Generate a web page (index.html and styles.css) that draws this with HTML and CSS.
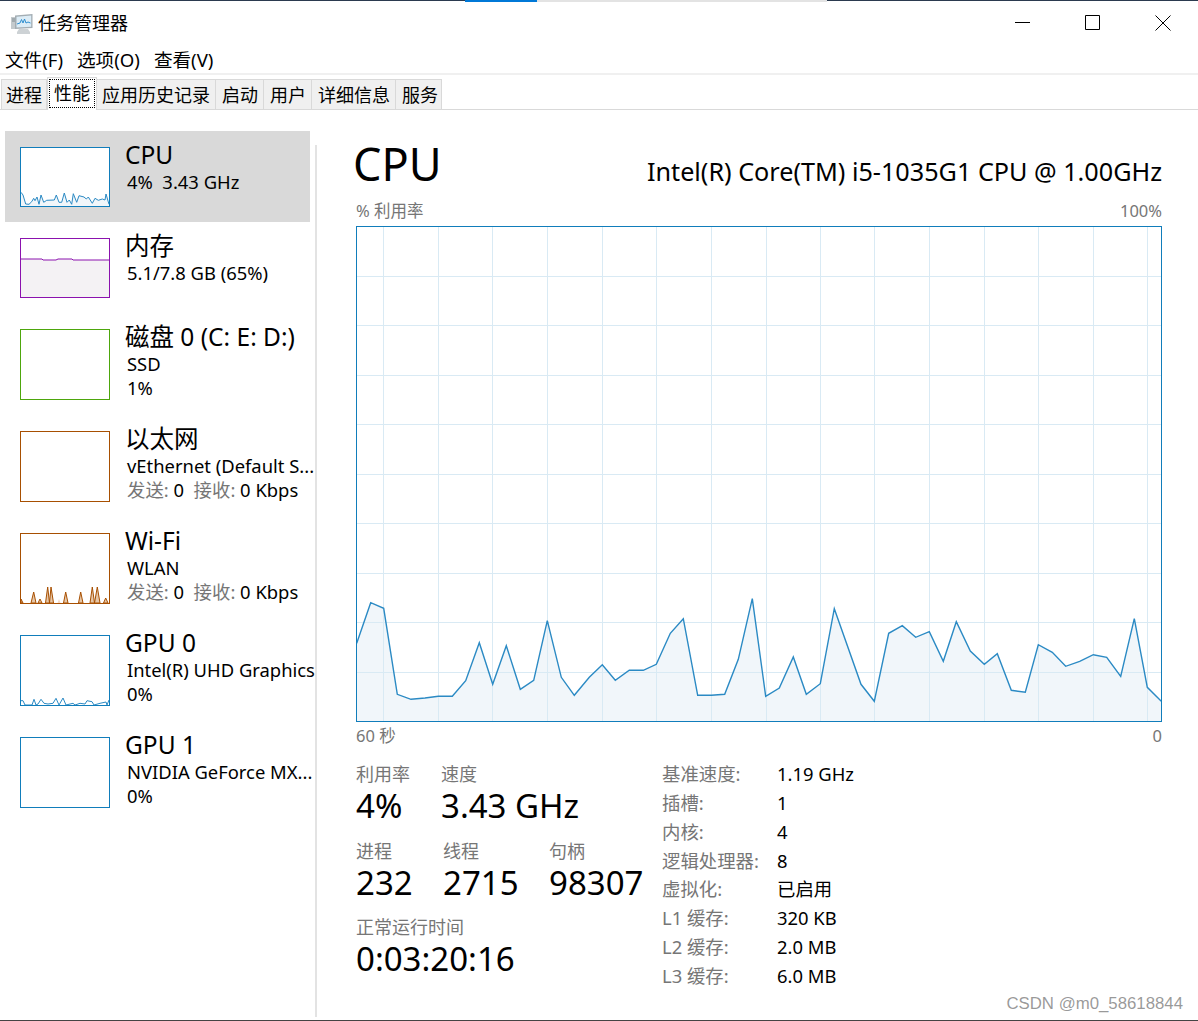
FILE: index.html
```html
<!DOCTYPE html>
<html lang="zh-CN">
<head>
  <meta charset="UTF-8" />
  <title>任务管理器</title>
  <link rel="stylesheet" href="styles.css">
</head>
<body>
  <div class="window">
    <div class="top-strip">
      <div class="strip-dark"></div>
      <div class="strip-blue"></div>
      <div class="strip-light"></div>
      <div class="strip-end"></div>
    </div>

    <div class="title-bar">
      <svg class="app-icon" viewBox="0 0 22 20">
        <path d="M0 3h5v12H0z" fill="#c4cacd"/>
        <path d="M1 5h3M1 7h3" stroke="#7f8a90"/>
        <path d="M4 1.5 21.5 0v14L4 15z" fill="#a3adb3"/>
        <path d="M5.500 2.800 20.200 1.600v11.200L5.500 13.600z" fill="#dcecf6"/>
        <path d="M6 10l3-1 1.500-3.500L12 9l1.500-4L15 9l2-1 2.500 1" fill="none" stroke="#2f8fd0"/>
        <path d="M8 15h9l2 3v2H6v-2z" fill="#cdd2d5"/>
      </svg>
      <span class="app-name">任务管理器</span>
      <div class="win-controls">
        <button class="win-btn"><svg width="16" height="16" viewBox="0 0 16 16"><path d="M0 7.500h15" stroke="#000"/></svg></button>
        <button class="win-btn"><svg width="16" height="16" viewBox="0 0 16 16"><path d="M.5.500h14v14H.5z" fill="none" stroke="#000"/></svg></button>
        <button class="win-btn"><svg width="16" height="16" viewBox="0 0 16 16"><path d="M.5.500l15 15M15.500.500l-15 15" stroke="#000"/></svg></button>
      </div>
    </div>

    <div class="menu-bar">
      <span>文件(F)</span>
      <span>选项(O)</span>
      <span>查看(V)</span>
    </div>

    <div class="tabs">
      <div class="tab tab-first">进程</div>
      <div class="tab tab-active"><span class="focus">性能</span></div>
      <div class="tab tab-apps">应用历史记录</div>
      <div class="tab">启动</div>
      <div class="tab">用户</div>
      <div class="tab">详细信息</div>
      <div class="tab tab-last">服务</div>
    </div>

    <div class="content">
      <div class="sidebar">
        <div class="item selected">
          <svg class="thumb cpu" viewBox="0 0 88 58" preserveAspectRatio="none">
            <polygon class="fill-blue" points="0,58 0,44.300 2,47 4.700,56 8,56.300 10.700,53.700 12.700,50.300 14,52.700 16,49 18,56.300 20,47 22.700,54.300 25.700,52.300 33.300,52 35.300,47 38,54.300 40.700,54.300 43.300,45 46,54.300 48.300,52 50.700,56.300 52.300,45.700 55.700,54.300 58,47.700 63,49 65.300,51 67.300,49 71.300,55.300 74,50.300 77.300,52.300 81.300,51 84,52 85,46 88,56.300 88,58"/>
            <polyline class="line-blue" points="0,44.300 2,47 4.700,56 8,56.300 10.700,53.700 12.700,50.300 14,52.700 16,49 18,56.300 20,47 22.700,54.300 25.700,52.300 33.300,52 35.300,47 38,54.300 40.700,54.300 43.300,45 46,54.300 48.300,52 50.700,56.300 52.300,45.700 55.700,54.300 58,47.700 63,49 65.300,51 67.300,49 71.300,55.300 74,50.300 77.300,52.300 81.300,51 84,52 85,46 88,56.300"/>
          </svg>
          <div class="info">
            <div class="name">CPU</div>
            <div class="detail">4%&nbsp; 3.43 GHz</div>
          </div>
        </div>
        <div class="item">
          <svg class="thumb mem" viewBox="0 0 88 58" preserveAspectRatio="none">
            <polygon class="fill-mem" points="0,20 21,20 22,21 35,21 37,20 51,20 52,21 88,21 88,58 0,58"/>
            <polyline class="line-mem" points="0,20 21,20 22,21 35,21 37,20 51,20 52,21 88,21"/>
          </svg>
          <div class="info">
            <div class="name">内存</div>
            <div class="detail">5.1/7.8 GB (65%)</div>
          </div>
        </div>
        <div class="item">
          <svg class="thumb tall disk" viewBox="0 0 88 69"></svg>
          <div class="info">
            <div class="name">磁盘 0 (C: E: D:)</div>
            <div class="detail">SSD</div>
            <div class="detail">1%</div>
          </div>
        </div>
        <div class="item">
          <svg class="thumb tall net" viewBox="0 0 88 69"></svg>
          <div class="info">
            <div class="name">以太网</div>
            <div class="detail">vEthernet (Default S...</div>
            <div class="detail"><span class="dim">发送:</span> 0&nbsp; <span class="dim">接收:</span> 0 Kbps</div>
          </div>
        </div>
        <div class="item">
          <svg class="thumb tall net" viewBox="0 0 88 69">
            <path class="peaks" d="M0 69V65L2 69ZM10 69L12.700 58L15 69ZM17 69L19 65L21 69ZM24.500 69L26.700 53L28.500 69L30 53L32.500 69ZM42.500 69L44.700 58L47 69ZM57.500 69L59.700 58L62 69ZM69 69L71.300 53L73.500 69L76.300 53L79 69ZM82.500 69L84.700 64L87 69Z"/>
            <path class="peak-pale" d="M36.500 69L38 65L39.500 69Z"/>
          </svg>
          <div class="info">
            <div class="name">Wi-Fi</div>
            <div class="detail">WLAN</div>
            <div class="detail"><span class="dim">发送:</span> 0&nbsp; <span class="dim">接收:</span> 0 Kbps</div>
          </div>
        </div>
        <div class="item">
          <svg class="thumb tall cpu" viewBox="0 0 88 69">
            <polyline class="line-blue" points="0,64.700 2,64.700 4,69 11,69 13,63.300 15,69 17,68 20,63.300 23,67.300 27,68 32,67.300 35,62.300 38,69 42,62 45,69 52,67.300 54,69 59,67.300 64,68 66,64.700 71,65.700 73,69 79,67.300 85,66 86,69 88,64"/>
          </svg>
          <div class="info">
            <div class="name">GPU 0</div>
            <div class="detail">Intel(R) UHD Graphics</div>
            <div class="detail">0%</div>
          </div>
        </div>
        <div class="item">
          <svg class="thumb tall cpu" viewBox="0 0 88 69"></svg>
          <div class="info">
            <div class="name">GPU 1</div>
            <div class="detail">NVIDIA GeForce MX...</div>
            <div class="detail">0%</div>
          </div>
        </div>
      </div>

      <div class="divider"></div>

      <div class="main">
        <div class="head">
          <div class="head-title">CPU</div>
          <div class="head-model">Intel(R) Core(TM) i5-1035G1 CPU @ 1.00GHz</div>
        </div>
        <div class="axis axis-top"><span>% 利用率</span><span>100%</span></div>
        <svg class="chart" viewBox="357 227 804 494" preserveAspectRatio="none">
          <polygon class="chart-fill" points="356.700,643.300 370.700,602.700 383.700,608.300 397.300,694.300 411,699.300 425,698 438.300,696.300 452.300,696.300 465.700,680.700 479.300,642.700 492.700,684.300 506.300,645.700 520.300,689.300 533.700,680.300 547.300,620.700 561.300,677.300 574.300,695.300 589.300,677.300 602.300,664.700 615.300,680.300 629.300,670.300 643.300,670.300 656.300,664.300 670.300,633.300 683.300,618.700 697.700,695.300 711.300,695.300 724.700,694.300 738.300,659.300 752.300,598.700 765.700,696.300 779.300,688 793.300,657 806.300,694.300 820.300,683.700 834.300,608.700 861,684.300 874.300,701.300 888.700,633.300 902.300,625.700 915.700,637.300 929.300,631.700 943.300,661.300 956.300,621.700 970.300,651 984.300,664.300 997.300,653.700 1011.300,690.300 1025.300,692.300 1038.300,644.700 1052.300,652.300 1065.700,666.300 1079.700,661.300 1093.300,654.700 1106.700,657.300 1120.700,676.300 1134.300,618.700 1147.300,687.300 1161.300,701.300 1161.300,721 356.700,721"/>
          <path class="chart-grid" d="M357 276.500H1161M357 325.500H1161M357 375.500H1161M357 424.500H1161M357 474.500H1161M357 523.500H1161M357 573.500H1161M357 622.500H1161M357 672.500H1161M383.500 227V721M438.500 227V721M492.500 227V721M547.500 227V721M602.500 227V721M656.500 227V721M711.500 227V721M766.500 227V721M820.500 227V721M874.500 227V721M929.500 227V721M984.500 227V721M1038.500 227V721M1093.500 227V721M1147.500 227V721"/>
          <polyline class="chart-line" points="356.700,643.300 370.700,602.700 383.700,608.300 397.300,694.300 411,699.300 425,698 438.300,696.300 452.300,696.300 465.700,680.700 479.300,642.700 492.700,684.300 506.300,645.700 520.300,689.300 533.700,680.300 547.300,620.700 561.300,677.300 574.300,695.300 589.300,677.300 602.300,664.700 615.300,680.300 629.300,670.300 643.300,670.300 656.300,664.300 670.300,633.300 683.300,618.700 697.700,695.300 711.300,695.300 724.700,694.300 738.300,659.300 752.300,598.700 765.700,696.300 779.300,688 793.300,657 806.300,694.300 820.300,683.700 834.300,608.700 861,684.300 874.300,701.300 888.700,633.300 902.300,625.700 915.700,637.300 929.300,631.700 943.300,661.300 956.300,621.700 970.300,651 984.300,664.300 997.300,653.700 1011.300,690.300 1025.300,692.300 1038.300,644.700 1052.300,652.300 1065.700,666.300 1079.700,661.300 1093.300,654.700 1106.700,657.300 1120.700,676.300 1134.300,618.700 1147.300,687.300 1161.300,701.300"/>
        </svg>
        <div class="axis axis-bottom"><span>60 秒</span><span>0</span></div>

        <div class="stats">
          <div class="live">
            <div class="live-row">
              <div class="stat w-84"><div class="stat-label">利用率</div><div class="stat-value">4%</div></div>
              <div class="stat"><div class="stat-label">速度</div><div class="stat-value">3.43 GHz</div></div>
            </div>
            <div class="live-row">
              <div class="stat w-88"><div class="stat-label">进程</div><div class="stat-value">232</div></div>
              <div class="stat w-105"><div class="stat-label">线程</div><div class="stat-value">2715</div></div>
              <div class="stat"><div class="stat-label">句柄</div><div class="stat-value">98307</div></div>
            </div>
            <div class="live-row">
              <div class="stat"><div class="stat-label">正常运行时间</div><div class="stat-value">0:03:20:16</div></div>
            </div>
          </div>
          <div class="specs">
            <div class="spec"><span>基准速度:</span><span>1.19 GHz</span></div>
            <div class="spec"><span>插槽:</span><span>1</span></div>
            <div class="spec"><span>内核:</span><span>4</span></div>
            <div class="spec"><span>逻辑处理器:</span><span>8</span></div>
            <div class="spec"><span>虚拟化:</span><span>已启用</span></div>
            <div class="spec"><span>L1 缓存:</span><span>320 KB</span></div>
            <div class="spec"><span>L2 缓存:</span><span>2.0 MB</span></div>
            <div class="spec"><span>L3 缓存:</span><span>6.0 MB</span></div>
          </div>
        </div>
      </div>
    </div>
    <div class="watermark">CSDN @m0_58618844</div>
  </div>
</body>
</html>
```

FILE: styles.css
```css
:root {
  --blue: #117dbb;
  --grey-text: #767676;
  --line: #d9d9d9;
}

* {
  box-sizing: border-box;
}

html, body {
  margin: 0;
  padding: 0;
  height: 1021px;
  overflow: hidden;
}

body {
  background: #fff;
  color: #000;
  font-family: "Noto Sans", "Noto Sans CJK SC", sans-serif;
  font-size: 18px;
}

.window {
  position: relative;
  height: 1021px;
  display: flex;
  flex-direction: column;
  border-bottom: 1px solid #444;
}

.top-strip {
  display: flex;
  height: 2px;
  flex: none;
}

.strip-dark { width: 465px; height: 1px; background: #2b3a4f; }
.strip-blue { width: 72px; background: #0078d7; }
.strip-light { width: 290px; background: #e3e3e3; }
.strip-end { flex: 1; height: 1px; background: #2b3a4f; }

.title-bar {
  height: 43px;
  flex: none;
  display: flex;
  align-items: center;
  padding-left: 11px;
}

.app-icon {
  width: 22px;
  height: 20px;
  margin-right: 5px;
}

.app-name {
  line-height: 43px;
}

.win-controls {
  margin-left: auto;
  display: flex;
  align-self: flex-start;
}

.win-btn {
  width: 70px;
  height: 42px;
  padding: 0;
  border: none;
  background: none;
  display: flex;
  align-items: center;
  justify-content: center;
}

.menu-bar {
  height: 30px;
  flex: none;
  display: flex;
  gap: 14px;
  padding: 0 0 2px 5px;
  align-items: center;
  border-bottom: 2px solid #f0f0f0;
  font-size: 18.600px;
}

.tabs {
  height: 35px;
  flex: none;
  display: flex;
  align-items: flex-end;
  padding-left: 1px;
  border-bottom: 1px solid var(--line);
}

.tab {
  height: 30px;
  padding: 0 5px 0 6px;
  background: #f0f0f0;
  border: 1px solid var(--line);
  border-width: 1px 1px 0 0;
  line-height: 31px;
  white-space: nowrap;
}

.tab-first {
  border-left-width: 1px;
  padding: 0 4px;
}

.tab-apps {
  padding: 0 5px;
}

.tab-last {
  padding: 0 3px 0 6px;
}

.tab-active {
  position: relative;
  z-index: 1;
  height: 33px;
  margin-bottom: -1px;
  padding: 1px;
  background: #fff;
  border-width: 1px 1px 0;
}

.focus {
  display: block;
  height: 29px;
  padding: 0 4px;
  border: 1px dotted #000;
  line-height: 26px;
}

.content {
  flex: 1;
  display: flex;
  min-height: 0;
}

.sidebar {
  width: 310px;
  flex: none;
  margin-left: 5px;
  padding-top: 21px;
}

.item {
  display: flex;
  padding: 16px 0 15px 15px;
  white-space: nowrap;
  width: 310px;
  overflow: hidden;
}

.item.selected {
  background: var(--line);
  width: 305px;
}

.thumb {
  width: 90px;
  height: 60px;
  flex: none;
  margin-right: 15px;
  background: #fff;
  border: 1px solid var(--blue);
  display: block;
}

.thumb.tall {
  height: 71px;
}

.thumb.mem { border-color: #8b12ae; }
.thumb.disk { border-color: #4da60c; }
.thumb.net { border-color: #a74f01; }

.fill-blue { fill: #f1f6fa; }
.line-blue { fill: none; stroke: #2b8ac4; stroke-width: 1; }
.fill-mem { fill: #f4f2f4; }
.line-mem { fill: none; stroke: #8b12ae; stroke-width: 1; }
.peaks { fill: #e6c7a8; stroke: #a74f01; stroke-width: 1; }
.peak-pale { fill: #f5d9c6; }

.info {
  margin-top: -7px;
}

.name {
  font-size: 24.500px;
  line-height: 30px;
}

.detail {
  font-size: 18.400px;
  line-height: 24px;
  margin-left: 2px;
}

.dim {
  color: var(--grey-text);
}

.divider {
  width: 2px;
  flex: none;
  margin: 35px 0 3px;
  background: #e3e3e3;
}

.main {
  width: 882px;
  padding: 24px 37px 0 39px;
}

.head {
  display: flex;
  justify-content: space-between;
  align-items: baseline;
  height: 56px;
}

.head-title {
  margin-left: -3px;
  font-size: 45px;
  line-height: 60px;
}

.head-model {
  font-size: 25.200px;
}

.axis {
  display: flex;
  justify-content: space-between;
  color: var(--grey-text);
  font-size: 16.500px;
  line-height: 22px;
}

.axis-top {
  margin-top: 10px;
  height: 26px;
}

.axis-bottom {
  margin-top: 3px;
}

.chart {
  display: block;
  width: 806px;
  height: 496px;
  border: 1px solid var(--blue);
}

.chart-fill { fill: #f1f6fa; }
.chart-grid { fill: none; stroke: #d9eaf4; stroke-width: 1; }
.chart-line { fill: none; stroke: #2b8ac4; stroke-width: 1.400; }

.stats {
  display: flex;
  margin-top: 15px;
}

.live {
  width: 306px;
  flex: none;
}

.live-row {
  display: flex;
  height: 76.500px;
}

.w-84 { width: 85px; }
.w-88 { width: 87px; }
.w-105 { width: 106px; }

.stat-label {
  color: var(--grey-text);
  line-height: 24px;
}

.stat-value {
  font-size: 33px;
  line-height: 40px;
}

.spec {
  display: flex;
  height: 28.860px;
  line-height: 24px;
  font-size: 18.400px;
}

.spec span:first-child {
  width: 115px;
  color: var(--grey-text);
}

.watermark {
  position: absolute;
  right: 15px;
  bottom: 6px;
  font-family: "Liberation Sans", sans-serif;
  font-size: 16.800px;
  color: rgba(120, 120, 120, 0.75);
}
```
